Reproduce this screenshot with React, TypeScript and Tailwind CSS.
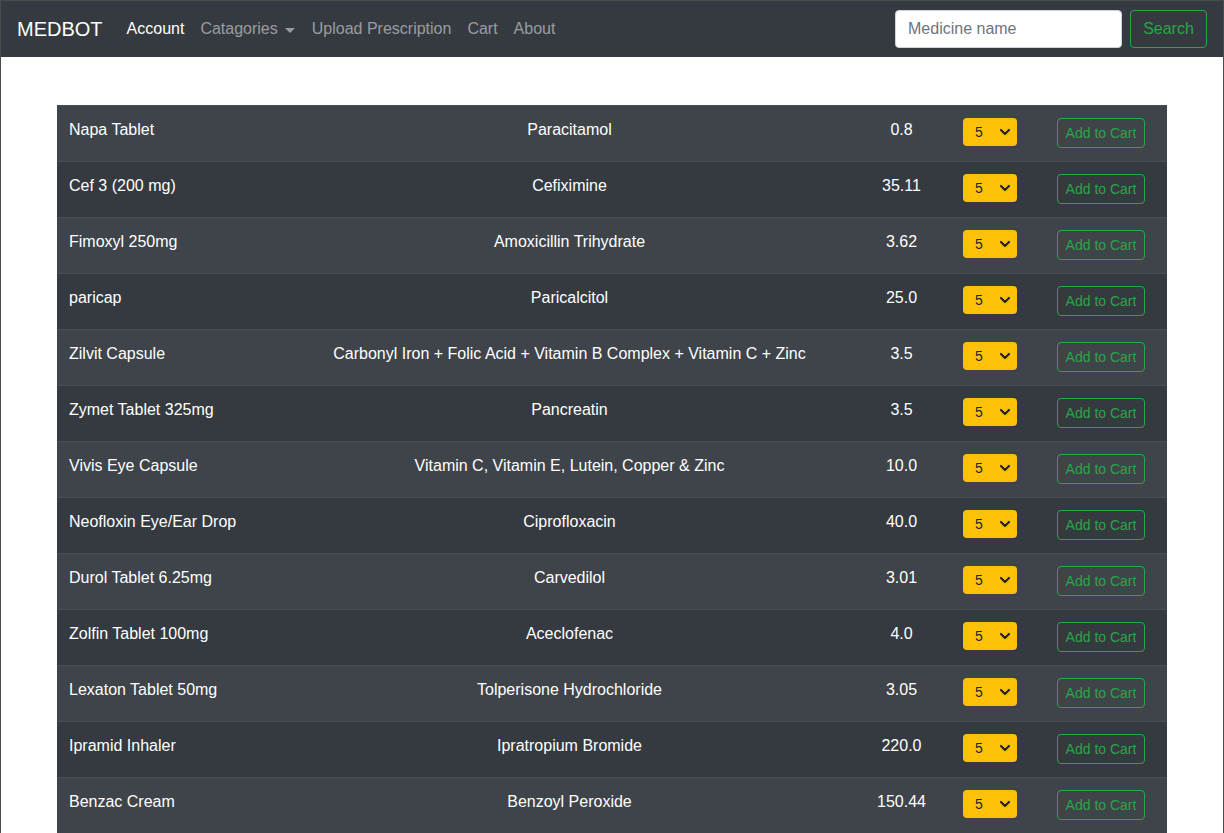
import React from "react";

const medicines = [
  { name: "Napa Tablet", generic: "Paracitamol", price: "0.8" },
  { name: "Cef 3 (200 mg)", generic: "Cefiximine", price: "35.11" },
  { name: "Fimoxyl 250mg", generic: "Amoxicillin Trihydrate", price: "3.62" },
  { name: "paricap", generic: "Paricalcitol", price: "25.0" },
  { name: "Zilvit Capsule", generic: "Carbonyl Iron + Folic Acid + Vitamin B Complex + Vitamin C + Zinc", price: "3.5" },
  { name: "Zymet Tablet 325mg", generic: "Pancreatin", price: "3.5" },
  { name: "Vivis Eye Capsule", generic: "Vitamin C, Vitamin E, Lutein, Copper & Zinc", price: "10.0" },
  { name: "Neofloxin Eye/Ear Drop", generic: "Ciprofloxacin", price: "40.0" },
  { name: "Durol Tablet 6.25mg", generic: "Carvedilol", price: "3.01" },
  { name: "Zolfin Tablet 100mg", generic: "Aceclofenac", price: "4.0" },
  { name: "Lexaton Tablet 50mg", generic: "Tolperisone Hydrochloride", price: "3.05" },
  { name: "Ipramid Inhaler", generic: "Ipratropium Bromide", price: "220.0" },
  { name: "Benzac Cream", generic: "Benzoyl Peroxide", price: "150.44" },
];

function QtySelect() {
  return (
    <div className="flex h-[28px] w-[54px] items-center justify-between rounded-[4px] bg-[#ffc107] pl-[12px] pr-[6px] text-[14px] text-[#212529]">
      <span>5</span>
      <svg width="12" height="8" viewBox="0 0 12 8" fill="none">
        <path d="M2 2l4 4 4-4" stroke="#212529" strokeWidth="2.2" strokeLinecap="round" strokeLinejoin="round" />
      </svg>
    </div>
  );
}

export default function App() {
  return (
    <div className="min-h-[833px] border-l border-r border-t border-[#4b4b4b] bg-white font-['Liberation_Sans',Arial,sans-serif]">
      {/* Navbar */}
      <nav className="flex h-[56px] items-center bg-[#343a40] px-[16px]">
        <span className="mr-[16px] text-[20px] leading-[30px] text-white">MEDBOT</span>
        <div className="flex items-center text-[16px]">
          <span className="px-[8px] text-white">Account</span>
          <span className="flex items-center pl-[8px] pr-[9px] text-[rgba(255,255,255,0.5)]">
            Catagories
            <span className="ml-[7px] mt-[2px] inline-block h-0 w-0 border-l-[5px] border-r-[5px] border-t-[5px] border-l-transparent border-r-transparent border-t-[rgba(255,255,255,0.5)]"></span>
          </span>
          <span className="px-[8px] text-[rgba(255,255,255,0.5)]">Upload Prescription</span>
          <span className="px-[8px] text-[rgba(255,255,255,0.5)]">Cart</span>
          <span className="px-[8px] text-[rgba(255,255,255,0.5)]">About</span>
        </div>
        <div className="ml-auto flex items-center gap-[8px]">
          <input
            placeholder="Medicine name"
            className="h-[38px] w-[227px] rounded-[4px] border border-[#ced4da] bg-white px-[12px] text-[16px] text-[#495057] placeholder:text-[#6c757d] outline-none"
          />
          <button className="h-[38px] w-[77px] rounded-[4px] border border-[#28a745] text-[16px] text-[#28a745]">
            Search
          </button>
        </div>
      </nav>

      {/* Table */}
      <div className="px-[56px] pt-[48px]">
        <div className="bg-[#343a40] text-[16px] leading-[24px] text-white">
          {medicines.map((m, i) => (
            <div
              key={m.name}
              className={`grid h-[56px] grid-cols-[264px_497px_133px_94px_122px] border-t border-[#454d55] ${
                i % 2 === 0 ? "bg-[#3e444a]" : "bg-[#343a40]"
              }`}
            >
              <div className="px-[12px] pt-[12px]">{m.name}</div>
              <div className="px-[12px] pt-[12px] text-center">{m.generic}</div>
              <div className="pl-[46px] pr-[12px] pt-[12px] text-center">{m.price}</div>
              <div className="pl-[12px] pt-[12px]">
                <QtySelect />
              </div>
              <div className="pl-[12px] pt-[12px]">
                <button className="h-[30px] w-[88px] rounded-[4px] border border-[#28a745] text-[14px] leading-[20px] text-[#28a745]">
                  Add to Cart
                </button>
              </div>
            </div>
          ))}
        </div>
      </div>
    </div>
  );
}
